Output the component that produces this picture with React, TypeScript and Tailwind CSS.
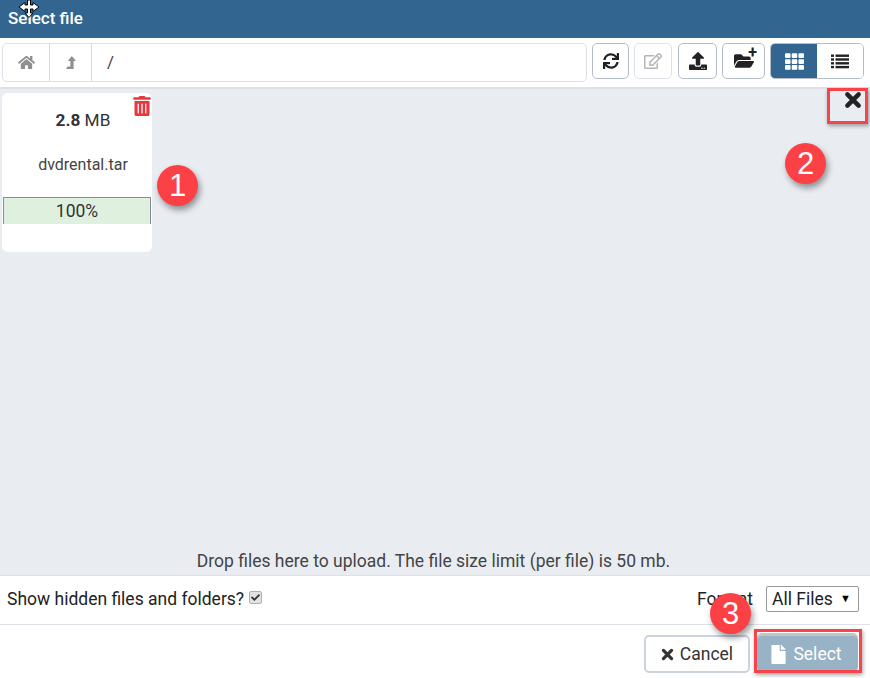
import { FaHome, FaSync, FaRegEdit, FaUpload, FaFolderOpen, FaTh, FaFile, FaTrashAlt, FaCheck } from "react-icons/fa";
import { ReactNode } from "react";

function ToolButton({ children, dim, className }: { children: ReactNode; dim?: boolean; className: string }) {
  return (
    <button className={`flex h-[36px] shrink-0 items-center justify-center rounded-[5px] border bg-white ${dim ? "border-[#dde0e6] text-[#b5b5b5]" : "border-[#b5bdcb] text-[#222222]"} ${className}`}>
      {children}
    </button>
  );
}

function Callout({ n, className }: { n: number; className: string }) {
  return (
    <div className={`absolute flex h-[41px] w-[41px] items-center justify-center rounded-full bg-[#fb4146] font-['Liberation_Sans',sans-serif] text-[31px] leading-none text-white shadow-[2px_4px_6px_rgba(0,0,0,0.4)] ${className}`}>
      {n}
    </div>
  );
}

function CrossIcon({ className }: { className: string }) {
  return (
    <svg viewBox="0 0 16 16" className={className} fill="none" stroke="currentColor" strokeWidth="4" strokeLinecap="round">
      <path d="M3 3L13 13M13 3L3 13" />
    </svg>
  );
}

function LevelUpIcon() {
  return (
    <svg viewBox="0 0 10 13" className="h-[13px] w-[10px]" fill="currentColor">
      <path d="M5.8 0L10 5H7.6V13H0L1.6 10.4H4.4V5H1.8Z" />
    </svg>
  );
}

function ListIcon() {
  return (
    <svg viewBox="0 0 18 15" className="h-[15px] w-[18px]" fill="currentColor">
      <rect x="0" y="0.5" width="3" height="2.4" />
      <rect x="4.5" y="0.5" width="13.5" height="2.4" />
      <rect x="0" y="4.3" width="3" height="2.4" />
      <rect x="4.5" y="4.3" width="13.5" height="2.4" />
      <rect x="0" y="8.1" width="3" height="2.4" />
      <rect x="4.5" y="8.1" width="13.5" height="2.4" />
      <rect x="0" y="11.9" width="3" height="2.4" />
      <rect x="4.5" y="11.9" width="13.5" height="2.4" />
    </svg>
  );
}

// mouse pointer caught in the screenshot
function MoveCursor() {
  return (
    <svg viewBox="0 0 22 18" className="absolute left-[18px] top-[0px] h-[18px] w-[22px]">
      <path
        d="M9.5 0H12.5V5H15V2.5L21 7L15 11.5V9H12.5V13H15L11 17.5L7 13H9.5V9H7V11.5L1 7L7 2.5V5H9.5Z"
        fill="#ffffff"
        stroke="#000000"
        strokeWidth="1"
      />
    </svg>
  );
}

export default function App() {
  return (
    <div className="relative flex h-[678px] w-[870px] flex-col overflow-hidden bg-white font-['Roboto',sans-serif] text-[#222222]">
      <div className="flex h-[38px] shrink-0 items-center bg-[#326690] pl-2 text-[17px] font-medium text-white">Select file</div>

      <div className="flex h-[51px] shrink-0 items-start border-b-2 border-[#dee1e7] pl-[2px] pt-[5px]">
        <div className="flex h-[39px] w-[585px] shrink-0 items-stretch rounded-[5px] border border-[#dde0e6]">
          <div className="flex w-[47px] items-center justify-center border-r border-[#d5d8e0] text-[#8f8f8f]"><FaHome size={17} /></div>
          <div className="flex w-[42px] items-center justify-center border-r border-[#d5d8e0] text-[#8f8f8f]"><LevelUpIcon /></div>
          <div className="flex items-center pl-[15px] text-[17px] text-[#444444]">/</div>
        </div>
        <ToolButton className="ml-[5px] w-[37px]"><FaSync size={16} /></ToolButton>
        <ToolButton dim className="ml-[5px] w-[38px]"><FaRegEdit size={18} /></ToolButton>
        <ToolButton className="ml-[6px] w-[39px]"><FaUpload size={18} /></ToolButton>
        <ToolButton className="relative ml-[5px] w-[43px]">
          <FaFolderOpen size={20} />
          <span className="absolute right-[7px] top-[1px] text-[16px] font-bold leading-none">+</span>
        </ToolButton>
        <div className="ml-[5px] flex h-[36px] w-[94px] shrink-0 overflow-hidden rounded-[5px] border border-[#b5bdcb]">
          <div className="flex w-[46px] items-center justify-center bg-[#326690] text-white"><FaTh size={19} /></div>
          <div className="flex flex-1 items-center justify-center bg-white"><ListIcon /></div>
        </div>
      </div>

      <div className="relative flex flex-1 flex-col justify-between bg-[#e9edf2] pl-[2px] pt-[4px]">
        <div className="relative flex h-[159px] w-[150px] flex-col rounded-[6px] bg-white">
          <FaTrashAlt size={20} className="absolute right-[0px] top-[3px] text-[#e8383d]" />
          <div className="pl-[12px] pt-[18px] text-center text-[17.25px] leading-[19px] text-[#333333]"><span className="font-bold">2.8</span> MB</div>
          <div className="pl-[12px] pt-[26px] text-center text-[16px] leading-[17px] text-[#444444]">dvdrental.tar</div>
          <div className="ml-[1px] mt-[24px] flex h-[27px] w-[148px] items-center justify-center border-x border-t border-[#868e9c] bg-[#dff0df] text-[17.5px] text-[#333333]">100%</div>
        </div>
        <div className="pb-[4px] pr-[5px] text-center text-[17.5px] leading-[19px] text-[#444444]">Drop files here to upload. The file size limit (per file) is 50 mb.</div>
      </div>

      <div className="flex h-[50px] shrink-0 items-center justify-between border-y border-[#dee1e7] pb-[2px] pl-[7px] pr-[11px] text-[17.5px]">
        <div className="flex items-center gap-[5px]">
          <span>Show hidden files and folders?</span>
          <span className="mb-[3px] flex h-[13px] w-[13px] items-center justify-center rounded-[2px] border border-[#b0b0b0] bg-[#e2e2e2] text-[#333333]"><FaCheck size={9} /></span>
        </div>
        <div className="flex items-center gap-[13px]">
          <span>Format</span>
          <div className="flex h-[26px] w-[93px] items-center justify-between rounded-[2px] border border-[#9a9a9a] bg-white pl-[5px] pr-[7px]">
            <span>All Files</span>
            <span className="text-[11px] text-black">▼</span>
          </div>
        </div>
      </div>

      <div className="flex h-[53px] shrink-0 items-center justify-end gap-[7px] pr-[12px] pt-[5px]">
        <button className="flex h-[38px] w-[106px] items-center justify-center gap-[6px] rounded-[5px] border-2 border-[#cdd3dd] bg-white text-[17.5px] text-[#333333]">
          <CrossIcon className="h-[13px] w-[13px]" />
          <span>Cancel</span>
        </button>
        <button className="flex h-[36px] w-[101px] items-center justify-center gap-[5px] rounded-[5px] bg-[#98b2c6] pr-[4px] text-[17.5px] text-white shadow-[0_-3px_0_#c4c4c4]">
          <FaFile size={19} />
          <span>Select</span>
        </button>
      </div>

      <MoveCursor />
      <CrossIcon className="absolute left-[844px] top-[91px] h-[18px] w-[18px] text-[#222222]" />
      <div className="absolute left-[827px] top-[88px] h-[36px] w-[41px] border-[3px] border-[#f7444a] shadow-[1px_2px_4px_rgba(0,0,0,0.35)]" />
      <div className="absolute left-[754px] top-[629px] h-[44px] w-[108px] border-[3px] border-[#f7444a] shadow-[1px_2px_4px_rgba(0,0,0,0.35)]" />
      <Callout n={1} className="left-[157px] top-[165px]" />
      <Callout n={2} className="left-[785px] top-[143px]" />
      <Callout n={3} className="left-[710px] top-[593px]" />
    </div>
  );
}
